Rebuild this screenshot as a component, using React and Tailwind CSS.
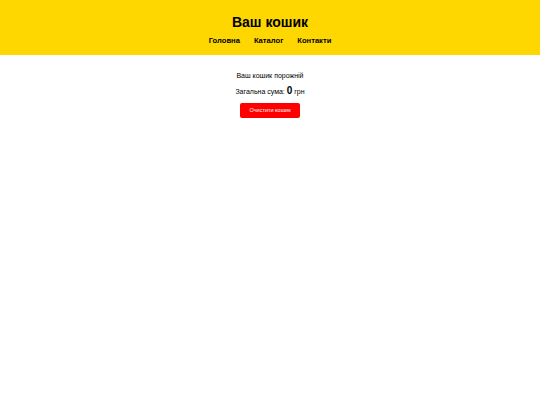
export default function App() {
    return (
        <div className="min-h-[405px] bg-white font-['Liberation_Sans',Arial,sans-serif] text-black">
            <header className="bg-[#ffd700] h-[55px] flex flex-col items-center pt-[13px]">
                <h1 className="text-[14px] font-bold leading-[18px]">Ваш кошик</h1>
                <nav className="flex gap-[14px] mt-[4px] text-[7.6px] font-bold leading-[12px]">
                    <a href="#">Головна</a>
                    <a href="#">Каталог</a>
                    <a href="#">Контакти</a>
                </nav>
            </header>
            <main className="flex flex-col items-center pt-[16px] text-[7px]">
                <p className="leading-[9px]">Ваш кошик порожній</p>
                <p className="mt-[5px] leading-[12px]">
                    Загальна сума: <span className="text-[10px] font-bold">0</span> грн
                </p>
                <button className="mt-[5px] w-[60px] h-[15px] bg-[#ff0000] text-white text-[5.5px] rounded-[2px]">
                    Очистити кошик
                </button>
            </main>
        </div>
    );
}
